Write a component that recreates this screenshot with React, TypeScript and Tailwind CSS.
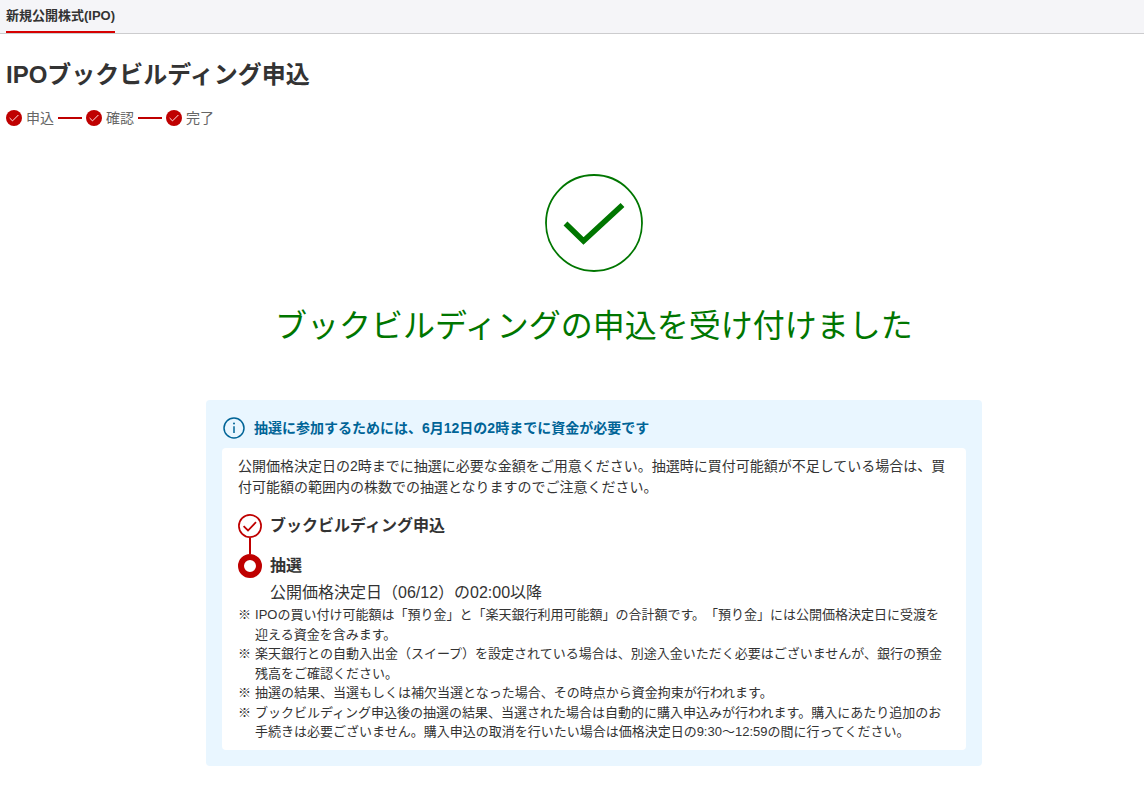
import React from "react";

const notes: string[] = [
    "IPOの買い付け可能額は「預り金」と「楽天銀行利用可能額」の合計額です。「預り金」には公開価格決定日に受渡を迎える資金を含みます。",
    "楽天銀行との自動入出金（スイープ）を設定されている場合は、別途入金いただく必要はございませんが、銀行の預金残高をご確認ください。",
    "抽選の結果、当選もしくは補欠当選となった場合、その時点から資金拘束が行われます。",
    "ブックビルディング申込後の抽選の結果、当選された場合は自動的に購入申込みが行われます。購入にあたり追加のお手続きは必要ございません。購入申込の取消を行いたい場合は価格決定日の9:30～12:59の間に行ってください。",
];

const Header: React.FC = () => {
    return (
        <header className="border-b border-[#ccccce] bg-[#f5f5f8] px-1.5">
            <nav className="flex">
                <a href="#ipo" className="border-b-2 border-[#d70000] pt-1.5 pb-[5px] text-[13px] leading-5 font-bold">
                    新規公開株式(IPO)
                </a>
            </nav>
        </header>
    );
};

const Steps: React.FC = () => {
    return (
        <ol className="mt-[15px] flex items-center gap-1 text-sm text-[#666]">
            {["申込", "確認", "完了"].map((label, i) => (
                <li key={label} className="flex items-center gap-1">
                    {i > 0 && <span className="h-0.5 w-6 bg-[#bf0000]" />}
                    <svg className="size-4" viewBox="0 0 16 16" fill="none" aria-hidden="true">
                        <circle cx="8" cy="8" r="8" fill="#bf0000" />
                        <path d="M3.6 8 L6.5 10.9 L12.4 5" stroke="#fff" strokeWidth="0.9" />
                    </svg>
                    {label}
                </li>
            ))}
        </ol>
    );
};

const Complete: React.FC = () => {
    return (
        <div className="mt-[46px] flex flex-col items-center text-[#007600]">
            <svg className="size-[98px]" viewBox="0 0 98 98" fill="none" stroke="currentColor" aria-hidden="true">
                <circle cx="49" cy="49" r="48" strokeWidth="1.8" />
                <path d="M20.5 49.5 L38.5 67 L77.5 31" strokeWidth="5.6" />
            </svg>
            <h2 className="mt-[30px] text-[32px] leading-[48px]">ブックビルディングの申込を受け付けました</h2>
        </div>
    );
};

const Schedule: React.FC = () => {
    return (
        <div className="mt-4 leading-6">
            <div className="flex gap-2 font-bold">
                <div className="flex flex-col items-center">
                    <svg className="size-6" viewBox="0 0 24 24" fill="none" stroke="#bf0000" aria-hidden="true">
                        <circle cx="12" cy="12" r="11.1" strokeWidth="1.7" />
                        <path d="M5.6 12.2 L10 16.5 L18 8.2" strokeWidth="1.8" />
                    </svg>
                    <span className="h-4 w-0.5 bg-[#bf0000]" />
                </div>
                <p>ブックビルディング申込</p>
            </div>
            <div className="flex gap-2 font-bold">
                <span className="size-6 rounded-full border-6 border-[#bf0000]" />
                <p>抽選</p>
            </div>
            <p className="mt-[3px] pl-8">公開価格決定日（06/12）の02:00以降</p>
        </div>
    );
};

const Notice: React.FC = () => {
    return (
        <section className="mx-auto mt-[50px] max-w-[776px] rounded bg-[#e9f6ff] p-4">
            <div className="flex h-6 items-center gap-2 text-[#006497]">
                <svg className="size-6" viewBox="0 0 24 24" fill="none" stroke="currentColor" aria-hidden="true">
                    <circle cx="12" cy="12" r="10" strokeWidth="1.5" />
                    <path d="M12 10.3 V17" strokeWidth="1.5" />
                    <circle cx="12" cy="7.6" r="1" fill="currentColor" stroke="none" />
                </svg>
                <h3 className="text-sm font-bold">抽選に参加するためには、6月12日の2時までに資金が必要です</h3>
            </div>
            <div className="mt-2 rounded bg-white px-4 py-2">
                <p className="text-sm leading-[21px]">
                    公開価格決定日の2時までに抽選に必要な金額をご用意ください。抽選時に買付可能額が不足している場合は、買付可能額の範囲内の株数での抽選となりますのでご注意ください。
                </p>
                <Schedule />
                <ul className="text-[13px] leading-normal">
                    {notes.map((note) => (
                        <li key={note} className="flex gap-1">
                            <span>※</span>
                            <span>{note}</span>
                        </li>
                    ))}
                </ul>
            </div>
        </section>
    );
};

const App: React.FC = () => {
    return (
        <div
            lang="ja"
            className="font-['Liberation_Sans','Noto_Sans_CJK_JP',sans-serif] text-[#333] [text-spacing-trim:space-all]"
        >
            <Header />
            <main className="px-1.5 pt-[23px] pb-6">
                <h1 className="text-2xl leading-9 font-bold">IPOブックビルディング申込</h1>
                <Steps />
                {/* Result area sits slightly right of the page centre */}
                <div className="pl-11">
                    <Complete />
                    <Notice />
                </div>
            </main>
        </div>
    );
};

export default App;
